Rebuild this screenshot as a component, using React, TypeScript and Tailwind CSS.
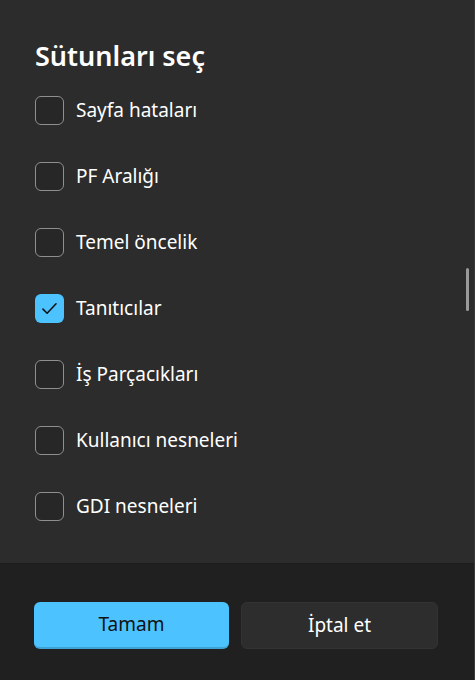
import React from 'react';

const columns = [
  { label: 'Sayfa hataları', checked: false },
  { label: 'PF Aralığı', checked: false },
  { label: 'Temel öncelik', checked: false },
  { label: 'Tanıtıcılar', checked: true },
  { label: 'İş Parçacıkları', checked: false },
  { label: 'Kullanıcı nesneleri', checked: false },
  { label: 'GDI nesneleri', checked: false },
];

const Checkbox: React.FC<{ checked: boolean }> = ({ checked }) => {
  if (checked) {
    return (
      <div className="w-[29px] h-[29px] rounded-[6px] bg-[#4cc2ff] flex items-center justify-center shrink-0">
        <svg width="19" height="19" viewBox="0 0 16 16" fill="none">
          <path d="M2.5 8.5l3.5 3.5 7.5-8" stroke="#111" strokeWidth="1.3" strokeLinecap="round" strokeLinejoin="round" />
        </svg>
      </div>
    );
  }
  return <div className="w-[29px] h-[29px] rounded-[6px] border-[1.5px] border-[#8f8f8f] bg-[#272727] shrink-0" />;
};

export default function App() {
  return (
    <div
      className="w-[475px] h-[680px] flex flex-col bg-[#2c2c2c] overflow-hidden border-r border-[#3a3a3a]"
      style={{ fontFamily: '"Noto Sans", "Open Sans", sans-serif' }}
    >
      <div className="flex-1 flex">
        <div className="flex-1 pl-[35px] pt-[36px]">
          <h1 className="text-[27px] leading-[40px] font-semibold text-white">Sütunları seç</h1>
          <div className="flex flex-col mt-[1px]">
            {columns.map((c) => (
              <div key={c.label} className="h-[66px] flex items-center gap-[12px]">
                <Checkbox checked={c.checked} />
                <span className="text-[19px] text-white">{c.label}</span>
              </div>
            ))}
          </div>
        </div>
        <div className="w-[14px] pt-[268px]">
          <div className="w-[3px] h-[43px] rounded-full bg-[#9a9a9a] ml-[6px]" />
        </div>
      </div>
      <div className="h-[117px] bg-[#202020] border-t border-[#1c1c1c] pl-[34px] pr-[36px] pt-[38px] flex gap-[12px]">
        <button className="flex-1 h-[47px] rounded-[6px] bg-[#4cc2ff] border-b-[2px] border-[#3fa3d8] text-[19px] text-[#111]">
          Tamam
        </button>
        <button className="flex-1 h-[47px] rounded-[6px] bg-[#2d2d2d] border border-[#333] text-[19px] text-white">
          İptal et
        </button>
      </div>
    </div>
  );
}
